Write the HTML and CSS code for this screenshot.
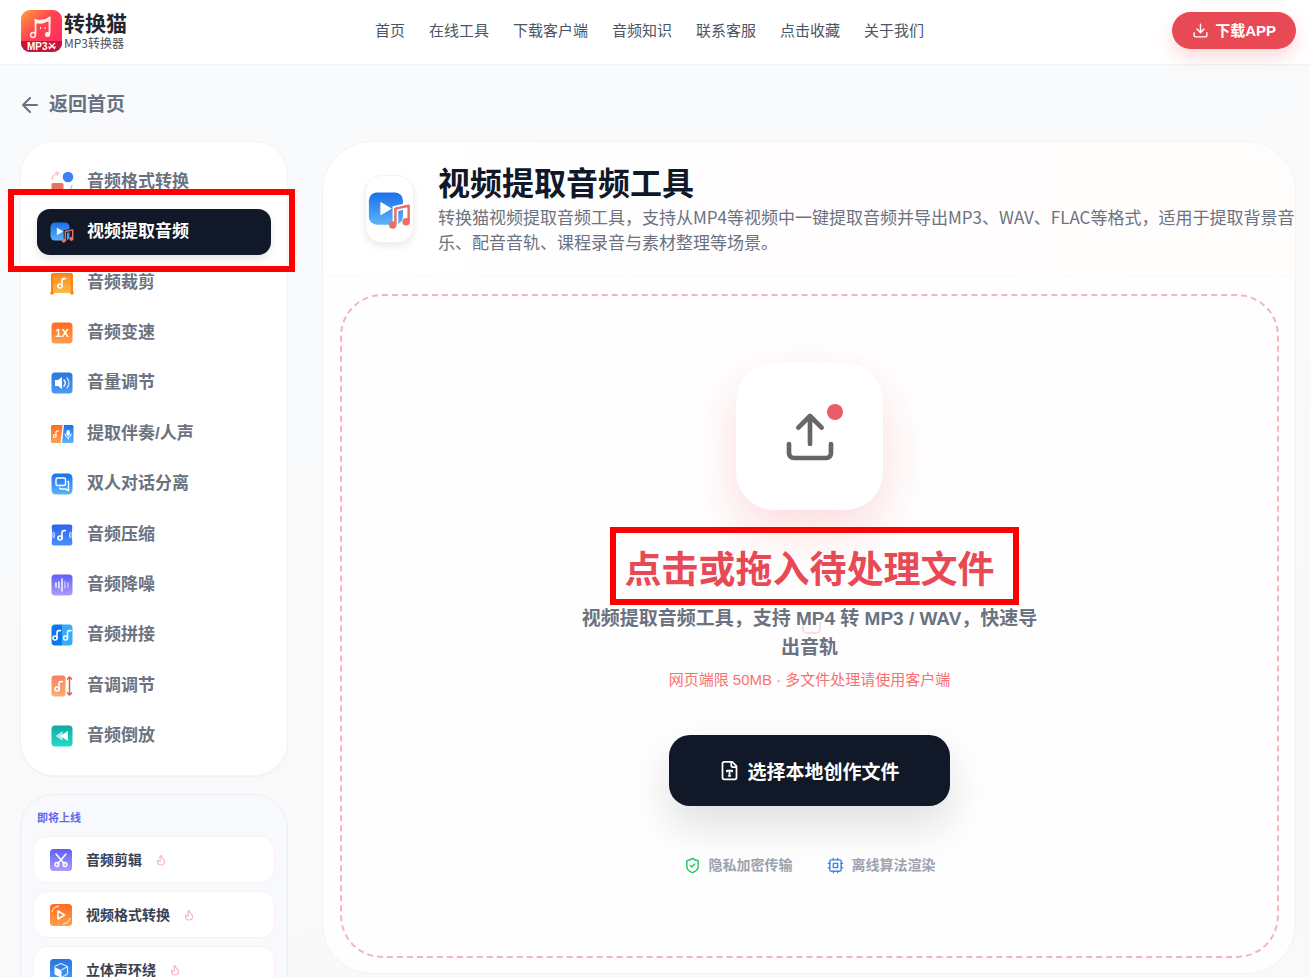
FILE: index.html
```
<!DOCTYPE html>
<html lang="zh-CN">
  <head>
    <meta charset="UTF-8" />
    <title>视频提取音频工具 - 转换猫</title>
    <link rel="stylesheet" href="styles.css" />
  </head>

  <body>
    <!-- shared gradients and symbols -->
    <svg class="defs" aria-hidden="true">
      <defs>
        <linearGradient id="blue" x1="0" y1="0" x2="0" y2="1"><stop offset="0" stop-color="#1a6fe8" /><stop offset="1" stop-color="#5cb4fb" /></linearGradient>
        <linearGradient id="royal" x1="0" y1="0" x2="0" y2="1"><stop offset="0" stop-color="#2a76d8" /><stop offset="1" stop-color="#4a98f8" /></linearGradient>
        <linearGradient id="indigo" x1="0" y1="0" x2="0" y2="1"><stop offset="0" stop-color="#2f63ec" /><stop offset="1" stop-color="#4a90fa" /></linearGradient>
        <linearGradient id="orange" x1="0" y1="0" x2="0" y2="1"><stop offset="0" stop-color="#ff6a22" /><stop offset="1" stop-color="#ff9f4e" /></linearGradient>
        <linearGradient id="amber" x1="0" y1="0" x2="0" y2="1"><stop offset="0" stop-color="#fb8a1c" /><stop offset="1" stop-color="#ffb84c" /></linearGradient>
        <linearGradient id="purple" x1="0" y1="0" x2="0" y2="1"><stop offset="0" stop-color="#5f5ff8" /><stop offset="1" stop-color="#ac9cfb" /></linearGradient>
        <linearGradient id="teal" x1="0" y1="0" x2="0" y2="1"><stop offset="0" stop-color="#12a8a4" /><stop offset="1" stop-color="#22dcc8" /></linearGradient>
        <linearGradient id="coral" x1="0" y1="0" x2="0" y2="1"><stop offset="0" stop-color="#f77f68" /><stop offset="1" stop-color="#ffae70" /></linearGradient>
        <linearGradient id="brand" x1="0" y1="0" x2="1" y2="1"><stop offset="0" stop-color="#ffa53c" /><stop offset="0.4" stop-color="#ff4650" /><stop offset="1" stop-color="#ff2464" /></linearGradient>
      </defs>
      <symbol id="note" viewBox="0 0 10 12">
        <circle cx="3" cy="9" r="2" fill="none" stroke="currentColor" stroke-width="1.6" />
        <path d="M5 9V3.2Q5.2 1.6 7 1.6H8.4" fill="none" stroke="currentColor" stroke-width="1.6" stroke-linecap="round" />
      </symbol>
      <symbol id="video-audio" viewBox="0 0 24 24">
        <rect x="0.5" y="2.5" width="19" height="18" rx="4.5" fill="url(#blue)" />
        <path d="M7.2 8.2v6.6l5.6-3.3z" fill="#fff" stroke="#fff" stroke-width="0.6" stroke-linejoin="round" />
        <path class="note-outline" d="M15.3 20v-8.5l7.400-1.600v8.600" fill="none" stroke-width="3.2" />
        <path d="M15.3 20.3v-8.8l7.4-1.6v8.8" fill="none" stroke="#ee6e62" stroke-width="1.4" stroke-linejoin="round" />
        <circle cx="13.8" cy="20.6" r="2.1" fill="#ee6e62" />
        <circle cx="21.3" cy="18.8" r="2.1" fill="#ee6e62" />
      </symbol>
      <symbol id="flame" viewBox="0 0 24 24">
        <path d="M8.5 14.5A2.5 2.5 0 0 0 11 12c0-1.4-.5-2-1-3-1.1-2.1-.2-4.1 2-6 .5 2.5 2 4.9 4 6.5 2 1.6 3 3.5 3 5.5a7 7 0 1 1-14 0c0-1.2.4-2.3 1-3a2.5 2.5 0 0 0 2.5 2.5z" fill="none" stroke="currentColor" stroke-width="2.4" stroke-linejoin="round" />
      </symbol>
    </svg>

    <header class="header">
      <a href="#" class="logo">
        <svg width="41" height="42" viewBox="0 0 41 42">
          <rect width="41" height="42" rx="9" fill="url(#brand)" />
          <path d="M0 31h41v2a9 9 0 0 1-9 9H9a9 9 0 0 1-9-9z" fill="#c8143c" />
          <path d="M14.5 24V9.500" fill="none" stroke="#fff0ea" stroke-width="1.8" />
          <path d="M28.500 24V7.500" fill="none" stroke="#fff0ea" stroke-width="1.8" />
          <path d="M13.6 8.500l4 1.500 7-1 4.800-3v7.500q-1.500-2.500-4-1.500-4 2.500-8 1.500-2-1-2.500 1.500z" fill="#fff0ea" />
          <circle cx="12" cy="25" r="2.400" fill="none" stroke="#fff0ea" stroke-width="1.5" />
          <circle cx="26.5" cy="24.5" r="2.500" fill="#fff0ea" />
          <path d="M19.500 17v2M24 17v2" stroke="#fff0ea" />
          <text x="6" y="40" class="logo-tag">MP3</text>
          <path d="M28 33l6 6M34 33l-6 6M27 37h8" stroke="#fff" stroke-width="1.2" />
        </svg>
        <span class="logo-text">
          <strong>转换猫</strong>
          <span>MP3转换器</span>
        </span>
      </a>
      <nav class="nav">
        <a href="#">首页</a>
        <a href="#">在线工具</a>
        <a href="#">下载客户端</a>
        <a href="#">音频知识</a>
        <a href="#">联系客服</a>
        <a href="#">点击收藏</a>
        <a href="#">关于我们</a>
      </nav>
      <button class="download-btn">
        <svg class="line-icon" width="17" height="17" viewBox="0 0 24 24"><path d="M21 15v4a2 2 0 0 1-2 2H5a2 2 0 0 1-2-2v-4M7 10l5 5 5-5M12 15V3" /></svg>
        下载APP
      </button>
    </header>

    <div class="container">
      <a href="#" class="back">
        <svg class="line-icon" width="16" height="16" viewBox="4 4 16 16"><path d="M12 19l-7-7 7-7M19 12H5" /></svg>
        返回首页
      </a>

      <div class="layout">
        <aside class="sidebar">
          <nav class="tools">
            <a href="#" class="tool">
              <svg width="24" height="24" viewBox="0 0 24 24">
                <rect x="1.5" y="13" width="12" height="9" rx="1.5" fill="#ee6e62" />
                <circle cx="18" cy="7" r="5.3" fill="#4380f6" />
                <path d="M2 10q.5-6 6-7M5.5 2L8.5 3L7 6" fill="none" stroke="#fbc9c5" stroke-width="1.5" />
                <path d="M22 15q-.5 5-5 6" fill="none" stroke="#a9caff" stroke-width="1.5" />
              </svg>
              音频格式转换
            </a>
            <a href="#" class="tool active">
              <svg width="24" height="24"><use href="#video-audio" /></svg>
              视频提取音频
              <span class="highlight-box"></span>
            </a>
            <a href="#" class="tool">
              <svg width="24" height="24" viewBox="0 0 24 24">
                <rect x="2" y="2" width="20" height="20" fill="url(#amber)" />
                <path d="M2 3v19M22 3v19M2 3.5h20" stroke="#fb8418" stroke-width="2" />
                <circle cx="2" cy="22" r="1.8" fill="#fb8418" />
                <circle cx="22" cy="22" r="1.8" fill="#fb8418" />
                <use href="#note" x="7" y="6" width="10" height="12" color="#fff" />
              </svg>
              音频裁剪
            </a>
            <a href="#" class="tool">
              <svg width="24" height="24" viewBox="0 0 24 24">
                <rect x="1.5" y="1.5" width="21" height="21" rx="3.5" fill="url(#orange)" />
                <text x="12" y="16" class="speed">1X</text>
              </svg>
              音频变速
            </a>
            <a href="#" class="tool">
              <svg width="24" height="24" viewBox="0 0 24 24">
                <rect x="1.5" y="1.5" width="21" height="21" rx="3.5" fill="url(#royal)" />
                <path d="M5 9h3l4-3v12l-4-3H5z" fill="#fff" />
                <path d="M14 9q2.5 3 0 6" fill="none" stroke="#fff" stroke-width="1.3" stroke-linecap="round" />
                <path d="M17 7q4 5 0 10" fill="none" stroke="#bfe0ff" stroke-width="1.3" stroke-linecap="round" />
              </svg>
              音量调节
            </a>
            <a href="#" class="tool">
              <svg width="24" height="24" viewBox="0 0 24 24">
                <path d="M2.5 3h10l-2 18h-8q-1.5 0-1.5-1.5v-15Q1 3 2.5 3z" fill="url(#orange)" />
                <path d="M14 3h8q1.5 0 1.5 1.5v15q0 1.5-1.5 1.5H12z" fill="url(#blue)" />
                <use href="#note" x="2.5" y="7.5" width="7" height="9" color="#fff" />
                <rect x="16.5" y="8" width="3.4" height="6" rx="1.7" fill="#fff" />
                <path d="M15 11.5q0 4 3.2 4t3.2-4M18.2 15.5v2" fill="none" stroke="#fff" />
              </svg>
              提取伴奏/人声
            </a>
            <a href="#" class="tool">
              <svg width="24" height="24" viewBox="0 0 24 24">
                <rect x="1.5" y="1.5" width="21" height="21" rx="4.5" fill="url(#blue)" />
                <path d="M7.5 6H14q1.5 0 1.5 1.5V12q0 1.5-1.5 1.5H7.5Q6 13.5 6 12V7.500Q6 6 7.500 6z" fill="none" stroke="#fff" stroke-width="1.4" stroke-linejoin="round" />
                <path d="M17.5 9.5h1v9l-3-1.500H11q-1.5 0-1.5-1.5" fill="none" stroke="#fff" stroke-width="1.4" stroke-linejoin="round" />
              </svg>
              双人对话分离
            </a>
            <a href="#" class="tool">
              <svg width="24" height="24" viewBox="0 0 24 24">
                <path d="M4 1.5h16q2.5 0 2.3 3-1.6 7.5 0 15 .2 3-2.3 3H4q-2.5 0-2.3-3 1.6-7.5 0-15-.2-3 2.3-3z" fill="url(#indigo)" />
                <path d="M3.5 9q1.8 3 0 6M20.5 9q-1.8 3 0 6" fill="none" stroke="#cfe2ff" stroke-width="1.2" />
                <use href="#note" x="7" y="6" width="10" height="12" color="#fff" />
              </svg>
              音频压缩
            </a>
            <a href="#" class="tool">
              <svg width="24" height="24" viewBox="0 0 24 24">
                <rect x="1.5" y="1.5" width="21" height="21" rx="3.5" fill="url(#purple)" />
                <path d="M6 10v4M9 9v6M12 6v12" stroke="#fff" stroke-width="1.4" stroke-linecap="round" />
                <path d="M15 9v6M18 10v4" stroke="#cfcaff" stroke-width="1.4" stroke-linecap="round" />
              </svg>
              音频降噪
            </a>
            <a href="#" class="tool">
              <svg width="24" height="24" viewBox="0 0 24 24">
                <path d="M5 1.5h7v21H5q-3.5 0-3.5-3.5V5Q1.5 1.5 5 1.5z" fill="#0c78ea" />
                <path d="M12 1.5h7q3.5 0 3.5 3.5v14q0 3.5-3.5 3.5h-7z" fill="#36adfa" />
                <use href="#note" x="2" y="6" width="10" height="12" color="#fff" />
                <use href="#note" x="12.5" y="6" width="10" height="12" color="#fff" />
              </svg>
              音频拼接
            </a>
            <a href="#" class="tool">
              <svg width="24" height="24" viewBox="0 0 24 24">
                <rect x="1.5" y="1.5" width="14" height="21" rx="3" fill="url(#coral)" />
                <use href="#note" x="4" y="6" width="10" height="12" color="#fff" />
                <path d="M19.5 3v18M17 5.5L19.5 3 22 5.5M17 18.5l2.5 2.5 2.5-2.5" fill="none" stroke="#d4664e" stroke-width="1.5" />
              </svg>
              音调调节
            </a>
            <a href="#" class="tool">
              <svg width="24" height="24" viewBox="0 0 24 24">
                <rect x="1.5" y="1.5" width="21" height="21" rx="3.5" fill="url(#teal)" />
                <path d="M5.5 12l7-5v10z" fill="#a4ece4" />
                <path d="M10 12l8-5v10z" fill="#fff" />
              </svg>
              音频倒放
            </a>
          </nav>

          <section class="upcoming">
            <h2>即将上线</h2>
            <a href="#" class="upcoming-item">
              <svg width="24" height="24" viewBox="0 0 24 24">
                <rect x="1" y="1" width="22" height="22" rx="3.5" fill="url(#purple)" />
                <path d="M7 6l8.5 10M17 6L8.5 16" stroke="#fff" stroke-width="1.5" stroke-linecap="round" />
                <circle cx="8" cy="16.5" r="2" fill="none" stroke="#fff" stroke-width="1.3" />
                <circle cx="16" cy="16.5" r="2" fill="none" stroke="#fff" stroke-width="1.3" />
              </svg>
              音频剪辑
              <svg class="flame" width="12" height="12"><use href="#flame" /></svg>
            </a>
            <a href="#" class="upcoming-item">
              <svg width="24" height="24" viewBox="0 0 24 24">
                <rect x="1" y="1" width="22" height="22" rx="3.5" fill="url(#orange)" />
                <path d="M9 8v8l6.5-4z" fill="none" stroke="#fff" stroke-width="1.5" stroke-linejoin="round" />
                <path d="M3 9q1-5 7-6M21 15q-1 5-7 6" fill="none" stroke="#ffd0a8" stroke-width="1.4" />
              </svg>
              视频格式转换
              <svg class="flame" width="12" height="12"><use href="#flame" /></svg>
            </a>
            <a href="#" class="upcoming-item">
              <svg width="24" height="24" viewBox="0 0 24 24">
                <rect x="1" y="1" width="22" height="22" rx="3.5" fill="url(#royal)" />
                <path d="M5.5 9l7 3.5V20l-7-3.8z" fill="#fff" />
                <path d="M5.5 8.5L12 5.5l6.5 3V16l-6 3.5M18.5 8.500l-6 3.500" fill="none" stroke="#d2e8ff" stroke-width="1.2" stroke-linejoin="round" />
              </svg>
              立体声环绕
              <svg class="flame" width="12" height="12"><use href="#flame" /></svg>
            </a>
          </section>
        </aside>

        <main class="workspace">
          <div class="workspace-header">
            <div class="tool-icon">
              <svg width="43" height="43"><use href="#video-audio" /></svg>
            </div>
            <div class="intro">
              <h1>视频提取音频工具</h1>
              <p>
                转换猫视频提取音频工具，支持从MP4等视频中一键提取音频并导出MP3、WAV、FLAC等格式，适用于提取背景音<br />乐、配音音轨、课程录音与素材整理等场景。
              </p>
            </div>
          </div>

          <div class="workspace-body">
            <div class="dropzone">
              <div class="upload-tile">
                <svg class="line-icon" width="56" height="56" viewBox="0 0 24 24"><path d="M21 15v4a2 2 0 0 1-2 2H5a2 2 0 0 1-2-2v-4M17 8l-5-5-5 5M12 3v12" /></svg>
                <span class="dot"></span>
              </div>
              <h2>点击或拖入待处理文件<span class="highlight-box"></span></h2>
              <p class="summary">视频提取音频工具，支持 MP4 转 MP3 / WAV，快速导出音轨</p>
              <p class="limit">网页端限 50MB · 多文件处理请使用客户端</p>
              <button class="select-btn">
                <svg class="line-icon" width="21" height="21" viewBox="0 0 24 24"><path d="M15 2H6a2 2 0 0 0-2 2v16a2 2 0 0 0 2 2h12a2 2 0 0 0 2-2V7zM14 2v4a2 2 0 0 0 2 2h4M9 13v-1h6v1M12 12v6M11 18h2" /></svg>
                选择本地创作文件
              </button>
              <ul class="features">
                <li>
                  <svg class="line-icon green" width="17" height="17" viewBox="0 0 24 24"><path d="M20 13c0 5-3.5 7.5-8 9-4.5-1.5-8-4-8-9V6a1 1 0 0 1 1-1c2 0 4.5-1.2 6.2-2.7a1.2 1.2 0 0 1 1.6 0C14.5 3.8 17 5 19 5a1 1 0 0 1 1 1zM9 12l2 2 4-4" /></svg>
                  隐私加密传输
                </li>
                <li>
                  <svg class="line-icon blue" width="17" height="17" viewBox="0 0 24 24"><rect x="4" y="4" width="16" height="16" rx="2" /><rect x="9" y="9" width="6" height="6" /><path d="M15 2v2M15 20v2M2 15h2M2 9h2M20 15h2M20 9h2M9 2v2M9 20v2" /></svg>
                  离线算法渲染
                </li>
              </ul>
            </div>
          </div>
        </main>
      </div>
    </div>
  </body>
</html>
```

FILE: styles.css
```
* {
  box-sizing: border-box;
}

body {
  margin: 0;
  height: 100vh;
  overflow: hidden;
  font-family: "Liberation Sans", "Noto Sans CJK SC", sans-serif;
  color: #111827;
  background: linear-gradient(160deg, #f8fafc 0%, #f9fafb 40%, #faf8f9 100%);
}

h1,
h2,
p,
ul {
  margin: 0;
  padding: 0;
}

a {
  color: inherit;
  text-decoration: none;
}

button {
  border: none;
  font-family: inherit;
  color: white;
  cursor: pointer;
}

svg {
  flex-shrink: 0;
}

.defs {
  position: absolute;
  width: 0;
  height: 0;
}

.line-icon {
  fill: none;
  stroke: currentColor;
  stroke-width: 2;
  stroke-linecap: round;
  stroke-linejoin: round;
}

.header {
  display: flex;
  justify-content: space-between;
  align-items: center;
  height: 65px;
  padding: 0 14px 3px 21px;
  background-color: white;
  border-bottom: 1px solid #f1f3f6;
}

.logo {
  display: flex;
  align-items: center;
  gap: 2px;
}

.logo-text {
  display: flex;
  flex-direction: column;
  font-family: "Noto Sans CJK SC", sans-serif;
  font-size: 12px;
  line-height: 16px;
  color: #4b5058;
}

.logo-text strong {
  font-size: 21px;
  line-height: 25px;
  color: #23262d;
}

.logo-tag {
  font-size: 10px;
  font-weight: bold;
  fill: white;
}

.nav {
  display: flex;
  gap: 24px;
  font-size: 15px;
  line-height: 20px;
  color: #4b5563;
}

.download-btn {
  display: flex;
  align-items: center;
  gap: 6px;
  height: 37px;
  padding: 0 20px;
  border-radius: 19px;
  background-color: #e84a55;
  box-shadow: 0 8px 18px rgba(248, 80, 90, 0.22);
  font-size: 15px;
  font-weight: bold;
  line-height: 20px;
}

.container {
  padding: 26px 14px 0 20px;
}

.back {
  display: inline-flex;
  align-items: center;
  gap: 11px;
  height: 28px;
  padding-left: 2px;
  font-size: 19px;
  font-weight: bold;
  line-height: 28px;
  color: #6b7280;
}

.layout {
  display: grid;
  grid-template-columns: 268px 1fr;
  gap: 34px;
  align-items: start;
  margin-top: 22px;
}

.sidebar {
  display: flex;
  flex-direction: column;
  gap: 18px;
}

.tools {
  display: flex;
  flex-direction: column;
  justify-content: space-between;
  min-height: 635px;
  padding: 17px 16px 16px;
  border: 1px solid #f3f4f6;
  border-radius: 34px;
  background-color: white;
  box-shadow: 0 1px 2px rgba(0, 0, 0, 0.04);
}

.tool {
  display: flex;
  align-items: center;
  gap: 13px;
  height: 46px;
  padding: 0 13px;
  border-radius: 13px;
  font-size: 17px;
  font-weight: bold;
  line-height: 24px;
  color: #6b7280;
}

.speed {
  font-size: 11px;
  font-weight: bold;
  fill: white;
  text-anchor: middle;
}

.note-outline {
  stroke: var(--icon-outline, white);
}

.active {
  --icon-outline: #111827;
  position: relative;
  background-color: #111827;
  color: white;
  box-shadow: 0 4px 8px rgba(0, 0, 0, 0.1);
}

.highlight-box {
  position: absolute;
  border: 6px solid #ff0000;
  pointer-events: none;
}

.active .highlight-box {
  inset: -20px -24px -17px -29px;
}

.upcoming {
  display: flex;
  flex-direction: column;
  gap: 8px;
  padding: 13px 12px;
  border: 1px solid #eceef6;
  border-radius: 34px;
  background-color: #f8f9fd;
}

.upcoming h2 {
  padding-left: 4px;
  font-size: 11px;
  line-height: 20px;
  color: #6366f1;
}

.upcoming-item {
  display: flex;
  align-items: center;
  gap: 13px;
  height: 47px;
  padding: 0 15px;
  border: 1px solid #fef0f0;
  border-radius: 14px;
  background-color: white;
  font-size: 14px;
  font-weight: bold;
  line-height: 20px;
  color: #374151;
}

.flame {
  color: #fbb4b8;
}

.workspace {
  min-width: 0;
  border: 1px solid #f1f3f5;
  border-radius: 50px;
  background-color: #fefefe;
}

.workspace-header {
  display: flex;
  align-items: center;
  gap: 24px;
  min-height: 135px;
  padding: 0 0 0 42px;
  border-bottom: 1px solid #f8f9fa;
  border-radius: 50px 50px 0 0;
  background: linear-gradient(90deg, #ffffff, #fffcfc);
}

.tool-icon {
  display: flex;
  flex-shrink: 0;
  align-items: center;
  justify-content: center;
  width: 49px;
  height: 68px;
  border: 1px solid #fdeeee;
  border-radius: 17px;
  background-color: white;
  box-shadow: 0 4px 6px rgba(0, 0, 0, 0.08);
}

.intro h1 {
  font-size: 32px;
  line-height: 40px;
}

.intro p {
  font-family: "Noto Sans CJK SC", sans-serif;
  font-size: 17px;
  line-height: 25px;
  white-space: nowrap;
  color: #6b7280;
}

.workspace-body {
  padding: 17px 16px 15px 17px;
}

.dropzone {
  display: flex;
  flex-direction: column;
  align-items: center;
  padding: 67px 20px 80px;
  border: 2px dashed #f7b5ba;
  border-radius: 42px;
  text-align: center;
}

.upload-tile {
  position: relative;
  display: flex;
  align-items: center;
  justify-content: center;
  width: 147px;
  height: 147px;
  border-radius: 38px;
  background-color: white;
  box-shadow: 0 20px 50px rgba(248, 80, 90, 0.2);
  color: #666666;
}

.dot {
  position: absolute;
  top: 41px;
  right: 40px;
  width: 16px;
  height: 16px;
  border-radius: 50%;
  background-color: #e85d67;
}

.dropzone h2 {
  position: relative;
  margin-top: 38px;
  font-size: 37px;
  line-height: 46px;
  color: #e84a55;
}

.dropzone h2 .highlight-box {
  inset: -21px -24px -11px -15px;
}

.summary {
  position: relative;
  isolation: isolate;
  max-width: 470px;
  margin-top: 10px;
  font-size: 19px;
  font-weight: bold;
  line-height: 29px;
  color: #6b7280;
}

/* faint ring under the text */
.summary::before {
  content: "";
  position: absolute;
  top: 18px;
  left: 50%;
  z-index: -1;
  width: 15px;
  height: 10px;
  margin-left: -8px;
  border: 2px solid #fcdcde;
  border-top: none;
  border-radius: 0 0 5px 5px;
}

.limit {
  margin-top: 7px;
  font-size: 15px;
  line-height: 22px;
  color: #f87171;
}

.select-btn {
  display: flex;
  align-items: center;
  justify-content: center;
  gap: 7px;
  height: 71px;
  margin-top: 44px;
  padding: 0 50px;
  border-radius: 21px;
  background-color: #111827;
  box-shadow: 0 20px 40px rgba(17, 24, 39, 0.13);
  font-size: 19px;
  font-weight: bold;
}

.features {
  display: flex;
  gap: 34px;
  margin-top: 48px;
  list-style: none;
  font-size: 14px;
  font-weight: bold;
  line-height: 22px;
  color: #9ca3af;
}

.features li {
  display: flex;
  align-items: center;
  gap: 8px;
}

.green {
  color: #22c55e;
}

.blue {
  color: #3b82f6;
}
```
